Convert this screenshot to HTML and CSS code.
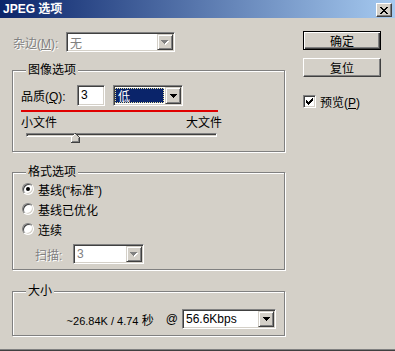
FILE: index.html
```html
<!DOCTYPE html>
<html lang="zh-CN">
<head>
    <meta charset="UTF-8">
    <meta name="viewport" content="width=device-width, initial-scale=1.0">
    <title>JPEG 选项</title>
    <link rel="stylesheet" href="styles.css">
</head>
<body>
    <div class="window">
        <div class="titlebar">
            <span class="title">JPEG 选项</span>
            <div class="close-btn">
                <svg width="8" height="7" viewBox="0 0 8 7" shape-rendering="crispEdges"><path d="M0 0h2v1h-2z M6 0h2v1h-2z M1 1h2v1h-2z M5 1h2v1h-2z M2 2h4v1h-4z M3 3h2v1h-2z M2 4h4v1h-4z M1 5h2v1h-2z M5 5h2v1h-2z M0 6h2v1h-2z M6 6h2v1h-2z"/></svg>
            </div>
        </div>
        <div class="client">
            <div class="main">
                <div class="row matte-row">
                    <span class="label disabled matte-label">杂边(<u>M</u>):</span>
                    <div class="combo combo-matte">
                        <span class="combo-text disabled-text">无</span>
                        <span class="combo-btn"><svg width="8" height="5" viewBox="0 0 8 5" shape-rendering="crispEdges"><path fill="#fff" d="M1 1h7v1h-1v1h-1v1h-1v1h-1v-1h-1v-1h-1v-1h-1z"/><path fill="#808080" d="M0 0h7v1h-1v1h-1v1h-1v1h-1v-1h-1v-1h-1v-1h-1z"/></svg></span>
                    </div>
                </div>

                <div class="group group-image">
                    <div class="group-title">图像选项</div>
                    <div class="row quality-row">
                        <span class="label quality-label">品质(<u>Q</u>):</span>
                        <div class="edit">3</div>
                        <div class="combo combo-quality">
                            <span class="combo-text"><span class="selected">低</span></span>
                            <span class="combo-btn"><svg width="7" height="4" viewBox="0 0 7 4" shape-rendering="crispEdges"><path d="M0 0h7v1h-1v1h-1v1h-1v1h-1v-1h-1v-1h-1v-1h-1z"/></svg></span>
                        </div>
                    </div>
                    <div class="red-line"></div>
                    <div class="size-labels">
                        <span>小文件</span>
                        <span>大文件</span>
                    </div>
                    <div class="slider">
                        <div class="track"></div>
                        <svg class="thumb" width="9" height="10" viewBox="0 0 9 10" shape-rendering="crispEdges">
                            <path d="M0.5 9.5V4.5L4.5 0.5L8.5 4.5V9.5Z" fill="#d4d0c8"/>
                            <path d="M0.5 9V4.5L4.5 0.5" fill="none" stroke="#fff"/>
                            <path d="M4.5 0.5L8.5 4.5V9.5H0" fill="none" stroke="#404040"/>
                            <path d="M7.5 5V8.5H1" fill="none" stroke="#808080"/>
                        </svg>
                    </div>
                </div>

                <div class="group group-format">
                    <div class="group-title">格式选项</div>
                    <div class="radio-row"><span class="radio checked"></span>基线(“标准”)</div>
                    <div class="radio-row"><span class="radio"></span>基线已优化</div>
                    <div class="radio-row"><span class="radio"></span>连续</div>
                    <div class="row scan-row">
                        <span class="label disabled scan-label">扫描:</span>
                        <div class="combo combo-scan">
                            <span class="combo-text disabled-text">3</span>
                            <span class="combo-btn"><svg width="8" height="5" viewBox="0 0 8 5" shape-rendering="crispEdges"><path fill="#fff" d="M1 1h7v1h-1v1h-1v1h-1v1h-1v-1h-1v-1h-1v-1h-1z"/><path fill="#808080" d="M0 0h7v1h-1v1h-1v1h-1v1h-1v-1h-1v-1h-1v-1h-1z"/></svg></span>
                        </div>
                    </div>
                </div>

                <div class="group group-size">
                    <div class="group-title">大小</div>
                    <div class="row size-row">
                        <span class="size-info"><span class="latin">~26.84K / 4.74</span> 秒</span>
                        <span class="at">@</span>
                        <div class="combo combo-speed">
                            <span class="combo-text">56.6Kbps</span>
                            <span class="combo-btn"><svg width="7" height="4" viewBox="0 0 7 4" shape-rendering="crispEdges"><path d="M0 0h7v1h-1v1h-1v1h-1v1h-1v-1h-1v-1h-1v-1h-1z"/></svg></span>
                        </div>
                    </div>
                </div>
            </div>

            <div class="side">
                <div class="btn btn-default"><span>确定</span></div>
                <div class="btn">复位</div>
                <div class="check-row">
                    <span class="checkbox"><svg width="7" height="7" viewBox="0 0 7 7" shape-rendering="crispEdges"><path d="M6 0h1v1h-1z M5 1h2v1h-2z M0 2h1v1h-1z M4 2h3v1h-3z M0 3h2v1h-2z M3 3h3v1h-3z M0 4h5v1h-5z M1 5h3v1h-3z M2 6h1v1h-1z"/></svg></span>
                    <span>预览(<u>P</u>)</span>
                </div>
            </div>
        </div>
    </div>
</body>
</html>
```

FILE: styles.css
```css
body {
    margin: 0;
    background: #d4d0c8;
    font: 12px "Liberation Sans", "Noto Sans CJK SC", sans-serif;
    color: #000;
}
.window {
    width: 395px;
    height: 351px;
    box-sizing: border-box;
    border-bottom: 1px solid #404040;
    box-shadow: inset 0 -1px #808080;
}
.titlebar {
    height: 18px;
    display: flex;
    justify-content: space-between;
    align-items: flex-start;
    background: linear-gradient(to right, #0a246a, #a6caf0);
}
.title {
    color: #fff;
    font-weight: bold;
    line-height: 18px;
    padding-left: 3px;
}
.close-btn {
    width: 16px;
    height: 14px;
    margin: 3px 3px 0 0;
    box-sizing: border-box;
    display: flex;
    align-items: center;
    justify-content: center;
    background: #d4d0c8;
    border: 1px solid;
    border-color: #fff #404040 #404040 #fff;
    box-shadow: inset -1px -1px #808080;
}
.client {
    display: flex;
    gap: 18px;
    padding-left: 12px;
}
.main {
    width: 273px;
    padding-top: 14px;
}
.side {
    width: 78px;
    padding-top: 13px;
}

/* rows */
.row {
    display: flex;
    align-items: center;
}
.label u, .check-row u {
    text-decoration: underline;
}
.disabled {
    color: #808080;
    text-shadow: 1px 1px #fff;
}
.matte-row {
    height: 20px;
}
.matte-label {
    width: 53px;
    padding-left: 1px;
}

/* sunken controls */
.combo, .edit {
    box-sizing: border-box;
    border: 1px solid;
    border-color: #808080 #fff #fff #808080;
    box-shadow: inset 1px 1px #404040, inset -1px -1px #d4d0c8;
    background: #fff;
    padding: 1px;
}
.combo {
    display: flex;
}
.combo-text {
    flex: 1;
    display: flex;
    align-items: center;
    padding-left: 2px;
}
.disabled-text {
    color: #808080;
}
.combo-btn {
    width: 16px;
    box-sizing: border-box;
    display: flex;
    align-items: center;
    justify-content: center;
    background: #d4d0c8;
    border: 1px solid;
    border-color: #d4d0c8 #404040 #404040 #d4d0c8;
    box-shadow: inset 1px 1px #fff, inset -1px -1px #808080;
}
.combo-matte {
    width: 109px;
    height: 20px;
}
.edit {
    width: 28px;
    height: 21px;
    padding-left: 3px;
    line-height: 17px;
}

/* group boxes */
.group {
    border: 1px solid #808080;
    box-shadow: inset 1px 1px #fff, 1px 1px #fff;
    padding: 0 8px;
}
.group-title {
    width: fit-content;
    margin: -8px 0 0 5px;
    padding: 0 2px;
    line-height: 14px;
    background: #d4d0c8;
}
.group-image {
    margin-top: 18px;
    padding-bottom: 8px;
}
.quality-row {
    height: 21px;
    margin-top: 8px;
}
.quality-label {
    width: 56px;
}
.combo-quality {
    width: 70px;
    height: 21px;
    margin-left: 8px;
}
.combo-quality .combo-text {
    padding: 1px 1px 1px 0;
}
.selected {
    flex: 1;
    height: 100%;
    box-sizing: border-box;
    padding-left: 3px;
    background: #0a246a;
    color: #fff;
    outline: 1px dotted #e8e0a0;
    outline-offset: -1px;
    display: flex;
    align-items: center;
}
.red-line {
    width: 197px;
    height: 2px;
    margin-top: 4px;
    background: #e00000;
}
.size-labels {
    width: 201px;
    margin-top: 4px;
    line-height: 14px;
    display: flex;
    justify-content: space-between;
}
.slider {
    position: relative;
    width: 191px;
    height: 10px;
    margin: 2px 0 0 5px;
}
.track {
    height: 4px;
    margin-top: 3px;
    box-sizing: border-box;
    border: 1px solid;
    border-color: #808080 #fff #fff #808080;
    box-shadow: inset 1px 1px #404040, inset -1px -1px #d4d0c8;
}
.thumb {
    position: absolute;
    left: 45px;
    top: 0;
}

.group-format {
    margin-top: 20px;
    padding-bottom: 5px;
}
.radio-row {
    height: 20px;
    display: flex;
    align-items: center;
    gap: 4px;
    padding-left: 1px;
}
.group-format .radio-row:first-of-type {
    margin-top: 1px;
}
.radio {
    width: 12px;
    height: 12px;
    box-sizing: border-box;
    border-radius: 50%;
    border: 1px solid;
    border-color: #808080 #fff #fff #808080;
    box-shadow: inset 1px 1px #404040, inset -1px -1px #d4d0c8;
    background: #fff;
    display: flex;
    align-items: center;
    justify-content: center;
}
.radio.checked::after {
    content: "";
    width: 4px;
    height: 4px;
    border-radius: 50%;
    background: #000;
}
.scan-row {
    height: 20px;
    margin-top: 5px;
    padding-left: 14px;
}
.scan-label {
    width: 38px;
}
.combo-scan {
    width: 71px;
    height: 20px;
}

.group-size {
    margin-top: 21px;
    padding-bottom: 6px;
}
.size-row {
    height: 20px;
    margin-top: 11px;
    justify-content: flex-end;
}
.latin {
    font-size: 11px;
}
.at {
    margin-left: 12px;
}
.combo-speed {
    width: 94px;
    height: 20px;
    margin-left: 4px;
}

/* buttons */
.btn {
    height: 19px;
    box-sizing: border-box;
    display: flex;
    align-items: center;
    justify-content: center;
    border: 1px solid;
    border-color: #fff #404040 #404040 #fff;
    box-shadow: inset -1px -1px #808080;
}
.btn-default {
    border-color: #000;
    box-shadow: inset 1px 1px #fff, inset -1px -1px #404040, inset -2px -2px #808080;
}
.btn + .btn {
    margin-top: 8px;
}
.check-row {
    margin-top: 16px;
    display: flex;
    align-items: center;
    gap: 4px;
}
.checkbox {
    width: 13px;
    height: 13px;
    box-sizing: border-box;
    border: 1px solid;
    border-color: #808080 #fff #fff #808080;
    box-shadow: inset 1px 1px #404040, inset -1px -1px #d4d0c8;
    background: #fff;
    display: flex;
    align-items: center;
    justify-content: center;
}
```
